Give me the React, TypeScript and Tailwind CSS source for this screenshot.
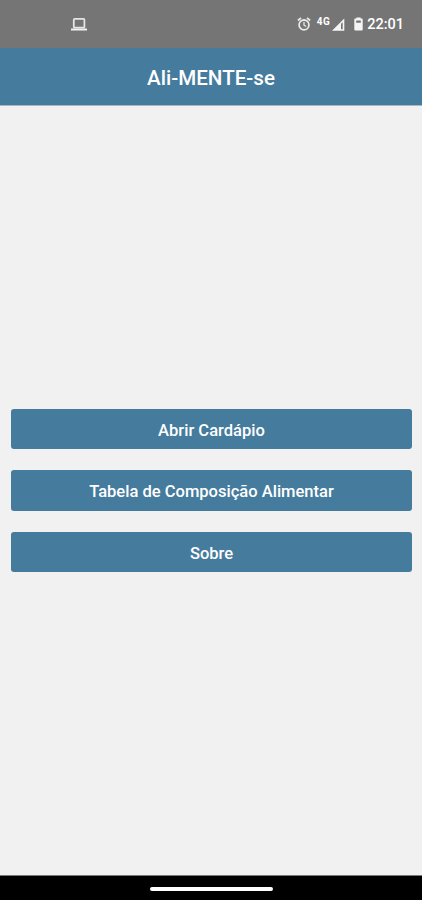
import { useState } from "react";

const MENU_ITEMS = [
  { id: "menu", label: "Abrir Cardápio" },
  { id: "table", label: "Tabela de Composição Alimentar" },
  { id: "about", label: "Sobre" },
];

function LaptopIcon() {
  return (
    <svg width="16" height="13" viewBox="0 0 16 13" fill="none">
      <rect x="2.8" y="0.9" width="10.6" height="8.8" rx="0.8" stroke="#e4e4e4" strokeWidth="1.8" />
      <path d="M0 10.5h16v1.5a.6.6 0 0 1-.6.6H.6a.6.6 0 0 1-.6-.6z" fill="#f2f2f2" />
    </svg>
  );
}

function AlarmIcon() {
  return (
    <svg width="14" height="14" viewBox="0 0 14 14" fill="none" stroke="#e8e8e8">
      <circle cx="7" cy="7.9" r="4.9" strokeWidth="1.8" />
      <path d="M0.9 3.5 4 0.9M13.1 3.5 10 0.9" strokeWidth="1.8" />
      <path d="M7 5v3.2l2.2 1.3" strokeWidth="1.3" />
    </svg>
  );
}

function SignalIcon() {
  return (
    <svg width="13" height="13" viewBox="0 0 13 13">
      <path d="M0 12.7 12.3 0.4v12.3zM9 5.8v5.4h1.7V4.2z" fill="#f5f5f5" fillRule="evenodd" />
    </svg>
  );
}

function BatteryIcon() {
  return (
    <svg width="9" height="14" viewBox="0 0 9 14">
      <path
        d="M2.4 0.6h4.2v1h1.2a.9.9 0 0 1 .9.9v10a.9.9 0 0 1-.9.9H1.2a.9.9 0 0 1-.9-.9v-10a.9.9 0 0 1 .9-.9h1.2zM2.2 3.4v2.4h4.6v-2.4z"
        fill="#f5f5f5"
        fillRule="evenodd"
      />
    </svg>
  );
}

function StatusBar() {
  return (
    <div className="flex h-12 items-center justify-between bg-[#757575] pr-[18px] pl-[71px] text-white">
      <LaptopIcon />
      <div className="flex items-center">
        <AlarmIcon />
        <span className="mr-[2px] ml-[6px] -mt-[5px] text-[10px] leading-none font-bold tracking-[0.4px]">4G</span>
        <SignalIcon />
        <span className="mr-[4px] ml-[9px]">
          <BatteryIcon />
        </span>
        <span className="pt-[2px] text-[14.5px] leading-none font-medium">22:01</span>
      </div>
    </div>
  );
}

export default function App() {
  const [selected, setSelected] = useState<string | null>(null);

  return (
    <div className="flex h-[900px] w-full flex-col bg-[#f1f1f1] font-['Roboto',sans-serif]">
      <StatusBar />
      <header className="flex h-[58px] items-center justify-center border-b border-[#a3bac7] bg-[#457b9d] pt-[4px]">
        <h1 className="text-[20.6px] font-medium text-white">Ali-MENTE-se</h1>
      </header>
      <main className="flex flex-1 flex-col justify-center gap-[21px] pr-[10px] pl-[11px]">
        {MENU_ITEMS.map((item) => (
          <button
            key={item.id}
            type="button"
            aria-pressed={selected === item.id}
            onClick={() => setSelected(item.id)}
            className="h-[40.5px] rounded-[3px] bg-[#457b9d] pt-[4px] text-[16.55px] font-medium text-white"
          >
            {item.label}
          </button>
        ))}
      </main>
      <footer className="flex h-[25px] justify-center border-t border-[#777] bg-black pt-[10.5px]">
        <div className="h-[4.5px] w-[123px] rounded-full bg-white" />
      </footer>
    </div>
  );
}
